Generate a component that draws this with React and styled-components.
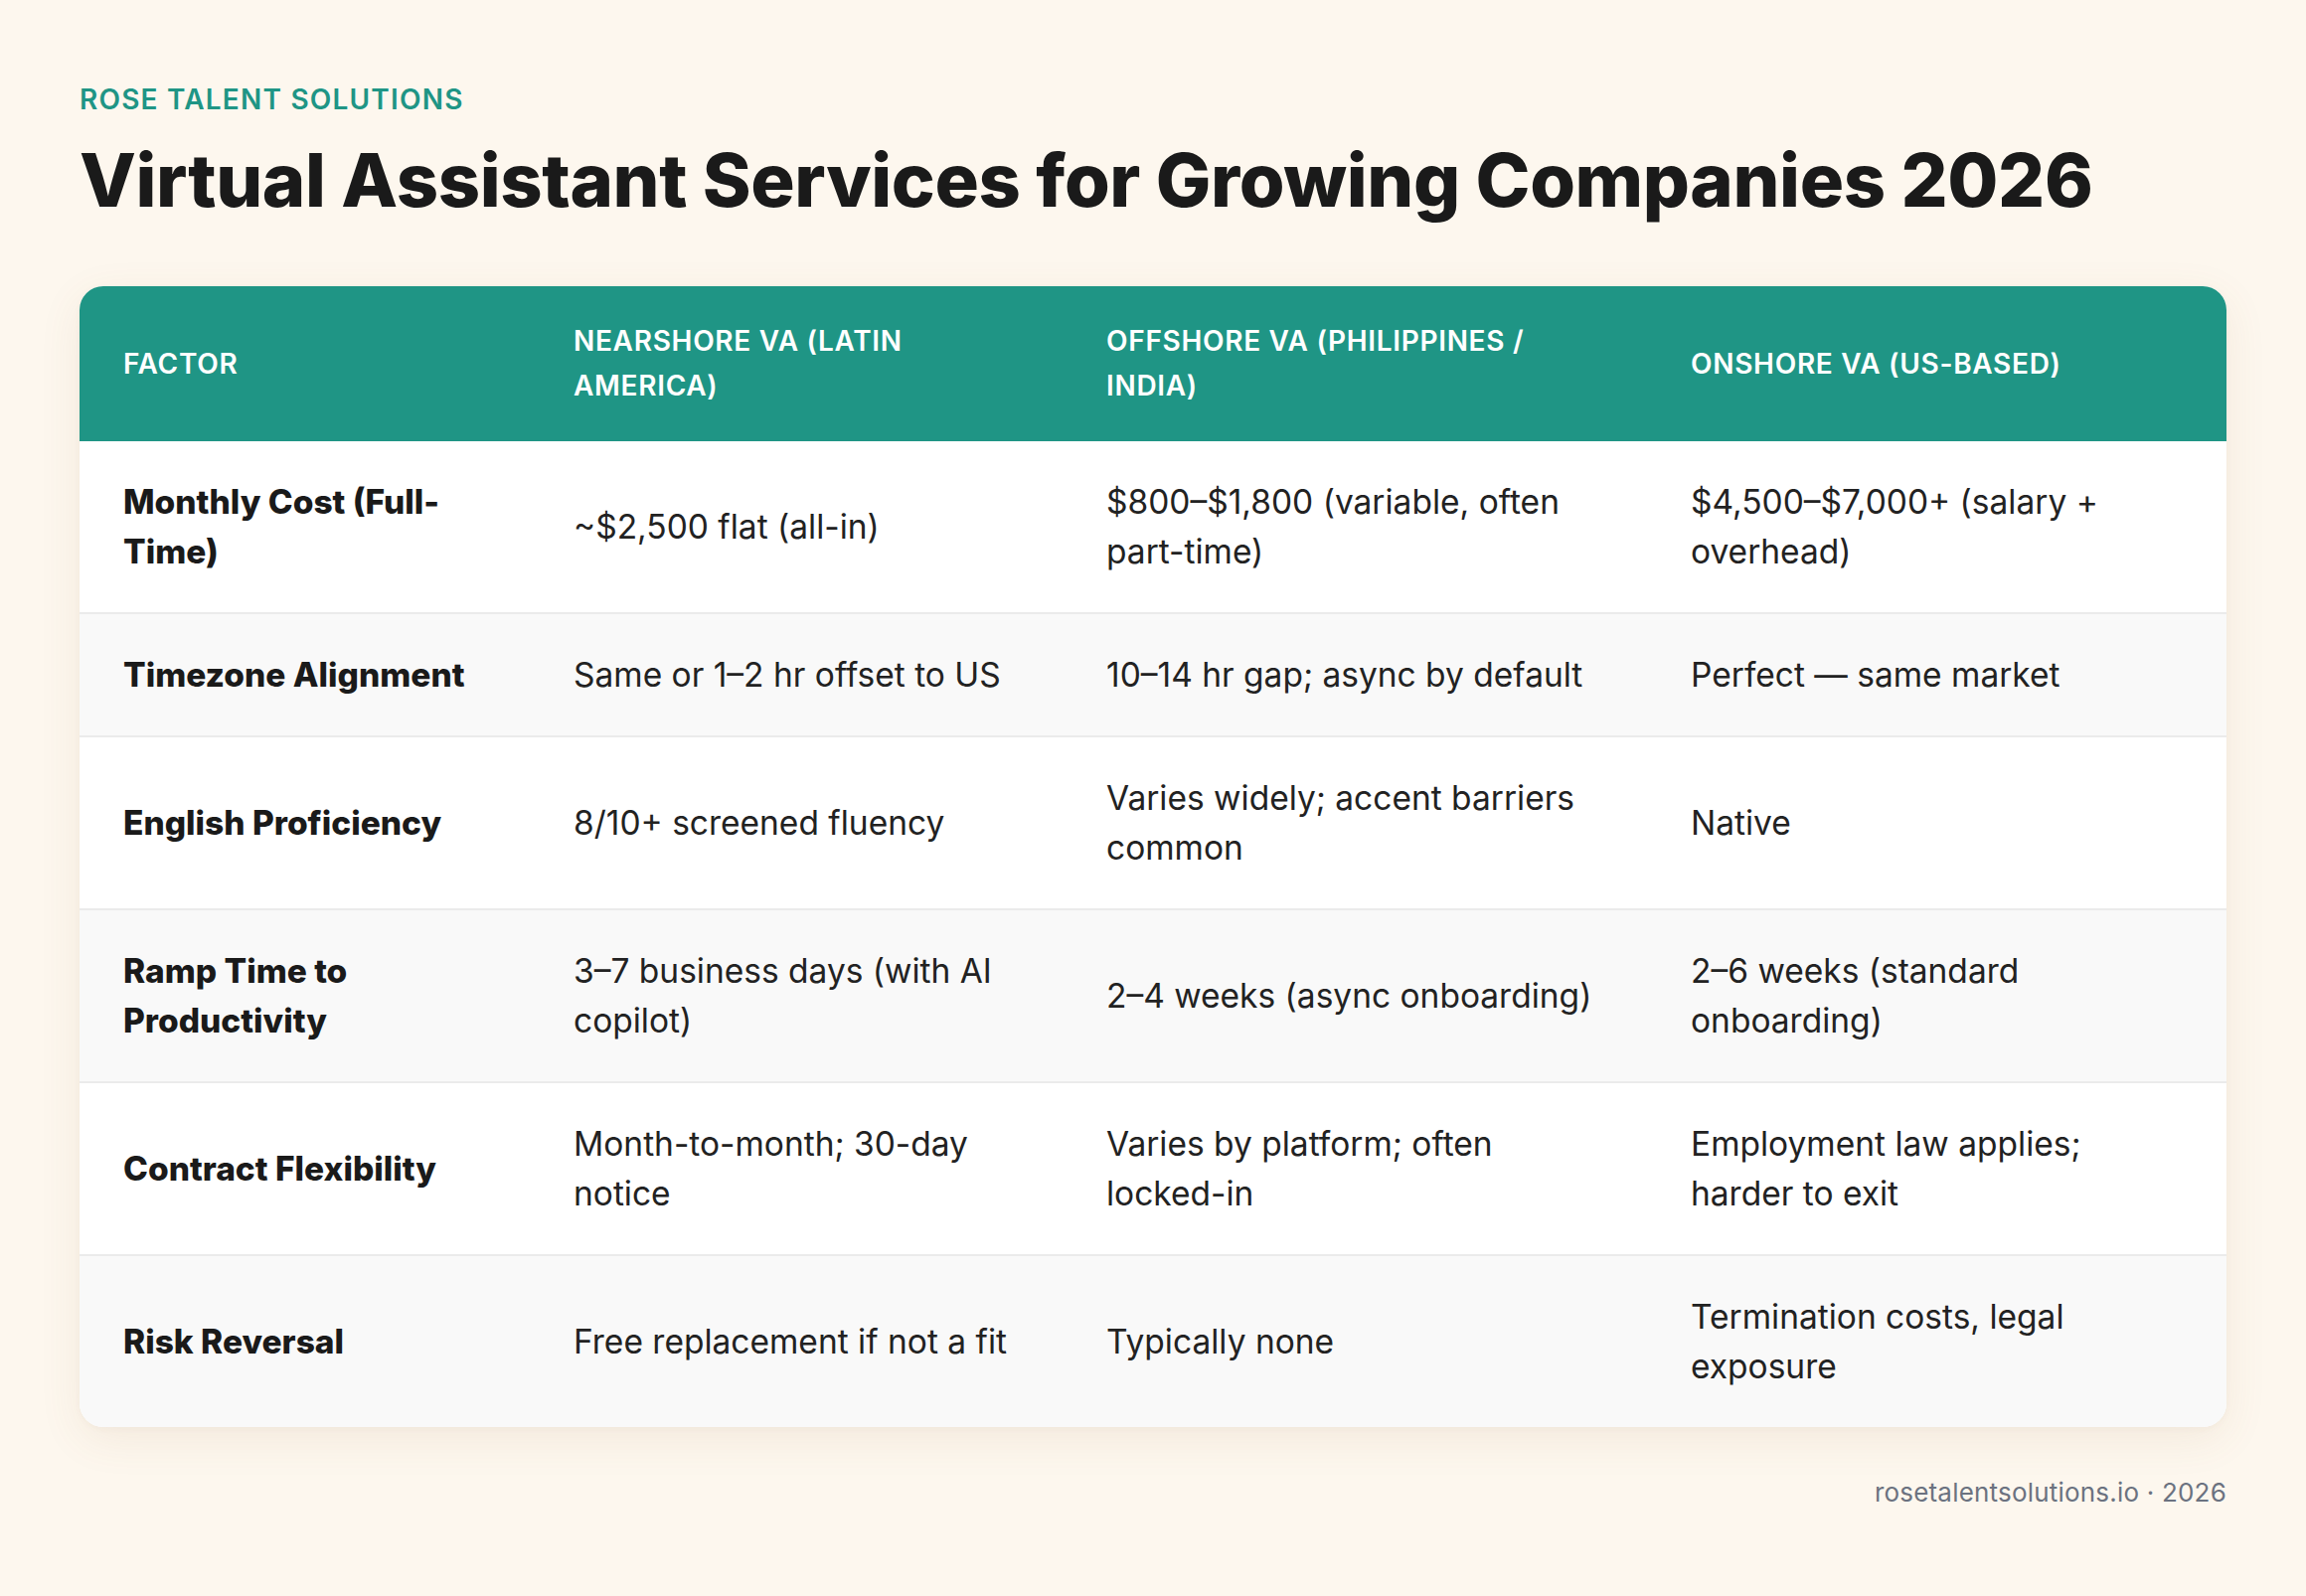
import React from "react";
import styled, { createGlobalStyle } from "styled-components";

const GlobalStyle = createGlobalStyle`
  html, body {
    margin: 0;
    padding: 0;
    background: #fdf7ee;
  }
  body {
    font-family: "Inter", "Liberation Sans", sans-serif;
    color: #1c1c1c;
    -webkit-font-smoothing: antialiased;
  }
  * { box-sizing: border-box; }
`;

const Page = styled.main`
  min-height: 1606px;
  padding: 83px 80px 60px;
  background: #fdf7ee;
`;

const Brand = styled.div`
  font-size: 28px;
  line-height: 34px;
  font-weight: 600;
  letter-spacing: 1.2px;
  text-transform: uppercase;
  color: #1f9585;
`;

const Title = styled.h1`
  margin: 20px 0 0;
  font-size: 74px;
  line-height: 89px;
  font-weight: 800;
  letter-spacing: -0.4px;
  color: #1a1a1a;
`;

const Card = styled.div`
  margin-top: 62px;
  border-radius: 24px;
  overflow: hidden;
  background: #ffffff;
  box-shadow: 0 12px 44px rgba(140, 100, 50, 0.09), 0 2px 6px rgba(140, 100, 50, 0.04);
`;

const Table = styled.table`
  width: 100%;
  border-collapse: collapse;
  table-layout: fixed;
`;

const HeadCell = styled.th`
  padding: 33px 46px 33px 44px;
  text-align: left;
  vertical-align: middle;
  background: #1f9585;
  color: #ffffff;
  font-size: 28px;
  line-height: 45px;
  font-weight: 600;
  letter-spacing: 0.7px;
  text-transform: uppercase;
`;

const Row = styled.tr`
  background: ${(p) => (p.$alt ? "#f9f9f9" : "#ffffff")};
  border-bottom: ${(p) => (p.$last ? "none" : "2px solid #ebebeb")};
`;

const Cell = styled.td`
  padding: 36px 46px 36px 44px;
  vertical-align: middle;
  font-size: 33.5px;
  line-height: 50px;
  font-weight: ${(p) => (p.$strong ? 800 : 400)};
  color: ${(p) => (p.$strong ? "#1a1a1a" : "#222222")};
`;

const Footer = styled.footer`
  margin-top: 50px;
  text-align: right;
  font-size: 26px;
  line-height: 32px;
  color: #6b7280;
  letter-spacing: 0.2px;
`;

const columns = [
  { label: "Factor", width: 453 },
  { label: "Nearshore VA (Latin America)", width: 536 },
  { label: "Offshore VA (Philippines / India)", width: 588 },
  { label: "Onshore VA (US-based)", width: 583 },
];

const rows = [
  ["Monthly Cost (Full-Time)", "~$2,500 flat (all-in)", "$800–$1,800 (variable, often part-time)", "$4,500–$7,000+ (salary + overhead)"],
  ["Timezone Alignment", "Same or 1–2 hr offset to US", "10–14 hr gap; async by default", "Perfect — same market"],
  ["English Proficiency", "8/10+ screened fluency", "Varies widely; accent barriers common", "Native"],
  ["Ramp Time to Productivity", "3–7 business days (with AI copilot)", "2–4 weeks (async onboarding)", "2–6 weeks (standard onboarding)"],
  ["Contract Flexibility", "Month-to-month; 30-day notice", "Varies by platform; often locked-in", "Employment law applies; harder to exit"],
  ["Risk Reversal", "Free replacement if not a fit", "Typically none", "Termination costs, legal exposure"],
];

export default function App() {
  return (
    <>
      <GlobalStyle />
      <Page>
        <Brand>Rose Talent Solutions</Brand>
        <Title>Virtual Assistant Services for Growing Companies 2026</Title>
        <Card>
          <Table>
            <colgroup>
              {columns.map((c) => (
                <col key={c.label} style={{ width: `${c.width}px` }} />
              ))}
            </colgroup>
            <thead>
              <tr>
                {columns.map((c) => (
                  <HeadCell key={c.label}>{c.label}</HeadCell>
                ))}
              </tr>
            </thead>
            <tbody>
              {rows.map((r, i) => (
                <Row key={r[0]} $alt={i % 2 === 1} $last={i === rows.length - 1}>
                  {r.map((v, j) => (
                    <Cell key={j} $strong={j === 0}>
                      {v}
                    </Cell>
                  ))}
                </Row>
              ))}
            </tbody>
          </Table>
        </Card>
        <Footer>rosetalentsolutions.io · 2026</Footer>
      </Page>
    </>
  );
}
